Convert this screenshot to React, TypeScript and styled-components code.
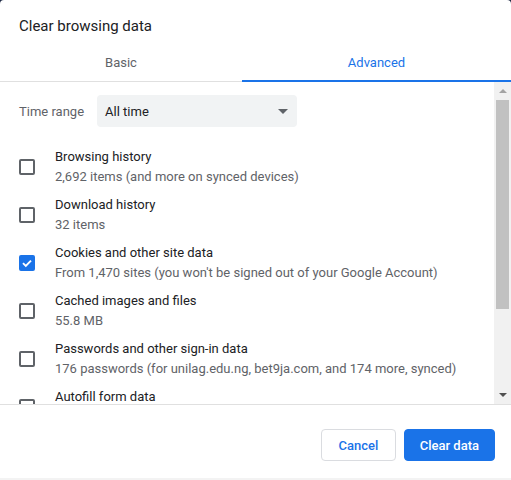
import { createGlobalStyle, styled } from 'styled-components'

const GlobalStyle = createGlobalStyle`
  html, body {
    margin: 0;
    padding: 0;
    background: #1c2742;
  }
  body {
    font-family: Roboto, "Liberation Sans", Arial, sans-serif;
    -webkit-font-smoothing: antialiased;
  }
`

const items = [
  { key: 'history', title: 'Browsing history', sub: '2,692 items (and more on synced devices)', checked: false },
  { key: 'downloads', title: 'Download history', sub: '32 items', checked: false },
  { key: 'cookies', title: 'Cookies and other site data', sub: "From 1,470 sites (you won't be signed out of your Google Account)", checked: true },
  { key: 'cache', title: 'Cached images and files', sub: '55.8 MB', checked: false },
  { key: 'passwords', title: 'Passwords and other sign-in data', sub: '176 passwords (for unilag.edu.ng, bet9ja.com, and 174 more, synced)', checked: false },
  { key: 'autofill', title: 'Autofill form data', sub: '', checked: false }
]

export default function App() {
  return (
    <>
      <GlobalStyle />
      <Dialog>
        <Title>Clear browsing data</Title>
        <Tabs>
          <Tab>Basic</Tab>
          <Tab $active>Advanced</Tab>
        </Tabs>
        <Body>
          <List>
            <TimeRow>
              <Label>Time range</Label>
              <Select>
                All time
                <Caret />
              </Select>
            </TimeRow>
            {items.map(item => (
              <Row key={item.key}>
                <Checkbox $checked={item.checked}>
                  {item.checked && (
                    <svg width="12" height="12" viewBox="0 0 12 12">
                      <path d="M2 6.2 L4.8 9 L10 3.6" fill="none" stroke="#fff" strokeWidth="1.9" />
                    </svg>
                  )}
                </Checkbox>
                <RowText>
                  <RowTitle>{item.title}</RowTitle>
                  {item.sub && <RowSub>{item.sub}</RowSub>}
                </RowText>
              </Row>
            ))}
          </List>
          <Scrollbar>
            <Arrow $dir="up" />
            <Track>
              <Thumb />
            </Track>
            <Arrow $dir="down" />
          </Scrollbar>
        </Body>
        <Footer>
          <Button>Cancel</Button>
          <Button $primary>Clear data</Button>
        </Footer>
      </Dialog>
    </>
  )
}

const Dialog = styled.div`
  width: 511px;
  height: 478px;
  background: #fff;
  border-radius: 4px 4px 0 0;
  border-bottom: 2px solid #f3f3f3;
  display: flex;
  flex-direction: column;
  overflow: hidden;
`
const Title = styled.div`
  font-size: 15px;
  color: #202124;
  padding: 16px 19px 0;
  height: 28px;
  line-height: 20px;
`
const Tabs = styled.div`
  display: grid;
  grid-template-columns: 242px 1fr;
  border-bottom: 1px solid #e0e0e0;
  height: 37px;
`
const Tab = styled.div<{ $active?: boolean }>`
  display: flex;
  align-items: center;
  justify-content: center;
  font-size: 13px;
  font-weight: 400;
  color: ${p => (p.$active ? '#1a73e8' : '#5f6368')};
  box-shadow: ${p => (p.$active ? 'inset 0 -2px 0 #1a73e8' : 'none')};
  margin-bottom: -1px;
  padding-bottom: 2px;
`
const Body = styled.div`
  display: flex;
  height: 322px;
  border-bottom: 1px solid #e0e0e0;
`
const List = styled.div`
  flex: 1;
  overflow: hidden;
  padding: 13px 0 0 19px;
`
const TimeRow = styled.div`
  display: flex;
  align-items: center;
  gap: 13px;
  height: 32px;
  margin-bottom: 16px;
`
const Label = styled.span`
  font-size: 13px;
  color: #5f6368;
`
const Select = styled.div`
  width: 200px;
  height: 32px;
  box-sizing: border-box;
  background: #f1f3f4;
  border-radius: 4px;
  display: flex;
  align-items: center;
  justify-content: space-between;
  padding: 0 9px 0 8px;
  font-size: 13px;
  color: #202124;
`
const Caret = styled.span`
  width: 0;
  height: 0;
  border-left: 5px solid transparent;
  border-right: 5px solid transparent;
  border-top: 5px solid #5f6368;
`
const Row = styled.div`
  display: flex;
  align-items: flex-start;
  gap: 20px;
  height: 48px;
  box-sizing: border-box;
  padding-top: 4px;
`
const Checkbox = styled.span<{ $checked?: boolean }>`
  width: 16px;
  height: 16px;
  margin-top: 12px;
  box-sizing: border-box;
  flex-shrink: 0;
  border-radius: 2px;
  border: 2px solid ${p => (p.$checked ? '#1a73e8' : '#5f6368')};
  background: ${p => (p.$checked ? '#1a73e8' : 'transparent')};
  display: flex;
  align-items: center;
  justify-content: center;
`
const RowText = styled.div`
  display: flex;
  flex-direction: column;
  font-size: 13px;
  line-height: 20px;
  white-space: nowrap;
`
const RowTitle = styled.span`
  color: #202124;
`
const RowSub = styled.span`
  color: #5f6368;
`
const Scrollbar = styled.div`
  width: 17px;
  background: #f1f1f1;
  display: flex;
  flex-direction: column;
  align-items: center;
`
const Arrow = styled.span<{ $dir: 'up' | 'down' }>`
  width: 0;
  height: 0;
  margin: 7px 0;
  border-left: 4px solid transparent;
  border-right: 4px solid transparent;
  ${p =>
    p.$dir === 'up'
      ? 'border-bottom: 4px solid #a3a3a3;'
      : 'border-top: 4px solid #505050;'}
`
const Track = styled.div`
  flex: 1;
  width: 13px;
`
const Thumb = styled.div`
  height: 209px;
  background: #c1c1c1;
`
const Footer = styled.div`
  flex: 1;
  display: flex;
  justify-content: flex-end;
  align-items: flex-start;
  gap: 8px;
  padding: 24px 16px 0;
`
const Button = styled.button<{ $primary?: boolean }>`
  height: 32px;
  padding: 0 ${p => (p.$primary ? '15px' : '16.5px')};
  border-radius: 4px;
  font-family: inherit;
  font-size: 13px;
  font-weight: 500;
  cursor: pointer;
  border: 1px solid ${p => (p.$primary ? '#1a73e8' : '#dadce0')};
  background: ${p => (p.$primary ? '#1a73e8' : '#fff')};
  color: ${p => (p.$primary ? '#fff' : '#1a73e8')};
`
